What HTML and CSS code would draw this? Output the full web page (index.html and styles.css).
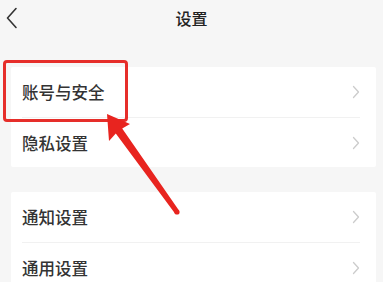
FILE: index.html
```html
<!DOCTYPE html>
<html lang="zh">
<head>
<meta charset="utf-8">
<title>设置</title>
<link rel="stylesheet" href="styles.css">
</head>
<body>
<div class="page">
  <header class="topbar">
    <svg class="back" width="12" height="22" viewBox="0 0 12 22"><polyline points="10,1.5 1.5,11 10,20.5" fill="none" stroke="#333" stroke-width="1.6" stroke-linecap="round" stroke-linejoin="round"/></svg>
    <div class="title">设置</div>
  </header>
  <section class="card first">
    <div class="row"><span class="label">账号与安全</span><svg class="chev" width="8" height="14" viewBox="0 0 8 14"><polyline points="1.5,1.5 6.5,7 1.5,12.5" fill="none" stroke="#cccccc" stroke-width="1.3" stroke-linecap="round" stroke-linejoin="round"/></svg></div>
    <div class="row"><span class="label">隐私设置</span><svg class="chev" width="8" height="14" viewBox="0 0 8 14"><polyline points="1.5,1.5 6.5,7 1.5,12.5" fill="none" stroke="#cccccc" stroke-width="1.3" stroke-linecap="round" stroke-linejoin="round"/></svg></div>
  </section>
  <section class="card second">
    <div class="row"><span class="label">通知设置</span><svg class="chev" width="8" height="14" viewBox="0 0 8 14"><polyline points="1.5,1.5 6.5,7 1.5,12.5" fill="none" stroke="#cccccc" stroke-width="1.3" stroke-linecap="round" stroke-linejoin="round"/></svg></div>
    <div class="row"><span class="label">通用设置</span><svg class="chev" width="8" height="14" viewBox="0 0 8 14"><polyline points="1.5,1.5 6.5,7 1.5,12.5" fill="none" stroke="#cccccc" stroke-width="1.3" stroke-linecap="round" stroke-linejoin="round"/></svg></div>
  </section>
  <svg class="annot" width="383" height="282" viewBox="0 0 383 282">
    <rect x="4.5" y="61.5" width="122" height="59" rx="2.5" fill="none" stroke="#e62e2a" stroke-width="3"/>
    <polygon points="107,114 130,124 122.2,128.6 179,210.5 175,213.5 115.8,133.4 109,141" fill="#e8241f"/>
    <circle cx="177" cy="212" r="2.6" fill="#e8241f"/>
  </svg>
</div>
</body>
</html>
```
FILE: styles.css
```css
html, body {
  margin: 0;
  padding: 0;
}
body {
  background: #f6f6f6;
  font-family: "Noto Sans CJK SC", "Noto Sans", sans-serif;
  color: #333;
  width: 383px;
  height: 282px;
  overflow: hidden;
}
.page {
  position: relative;
  width: 383px;
  height: 282px;
}
.topbar {
  height: 36px;
  display: flex;
  align-items: center;
  justify-content: center;
  position: relative;
}
.back {
  position: absolute;
  left: 6px;
  top: 7px;
}
.title {
  font-size: 16px;
  font-weight: 500;
  color: #222;
  line-height: 36px;
}
.card {
  background: #fff;
  margin: 0 7px 0 11px;
  border-radius: 2px;
}
.card.first {
  margin-top: 31px;
}
.card.second {
  margin-top: 25px;
}
.row {
  height: 50px;
  margin: 0 16px 0 11px;
  display: flex;
  align-items: center;
  justify-content: space-between;
}
.row + .row {
  border-top: 1px solid #f1f1f1;
  height: 49px;
}
.label {
  font-size: 16.5px;
  font-weight: 500;
  color: #333;
}
.chev {
  display: block;
}
.annot {
  position: absolute;
  left: 0;
  top: 0;
  pointer-events: none;
}
```
